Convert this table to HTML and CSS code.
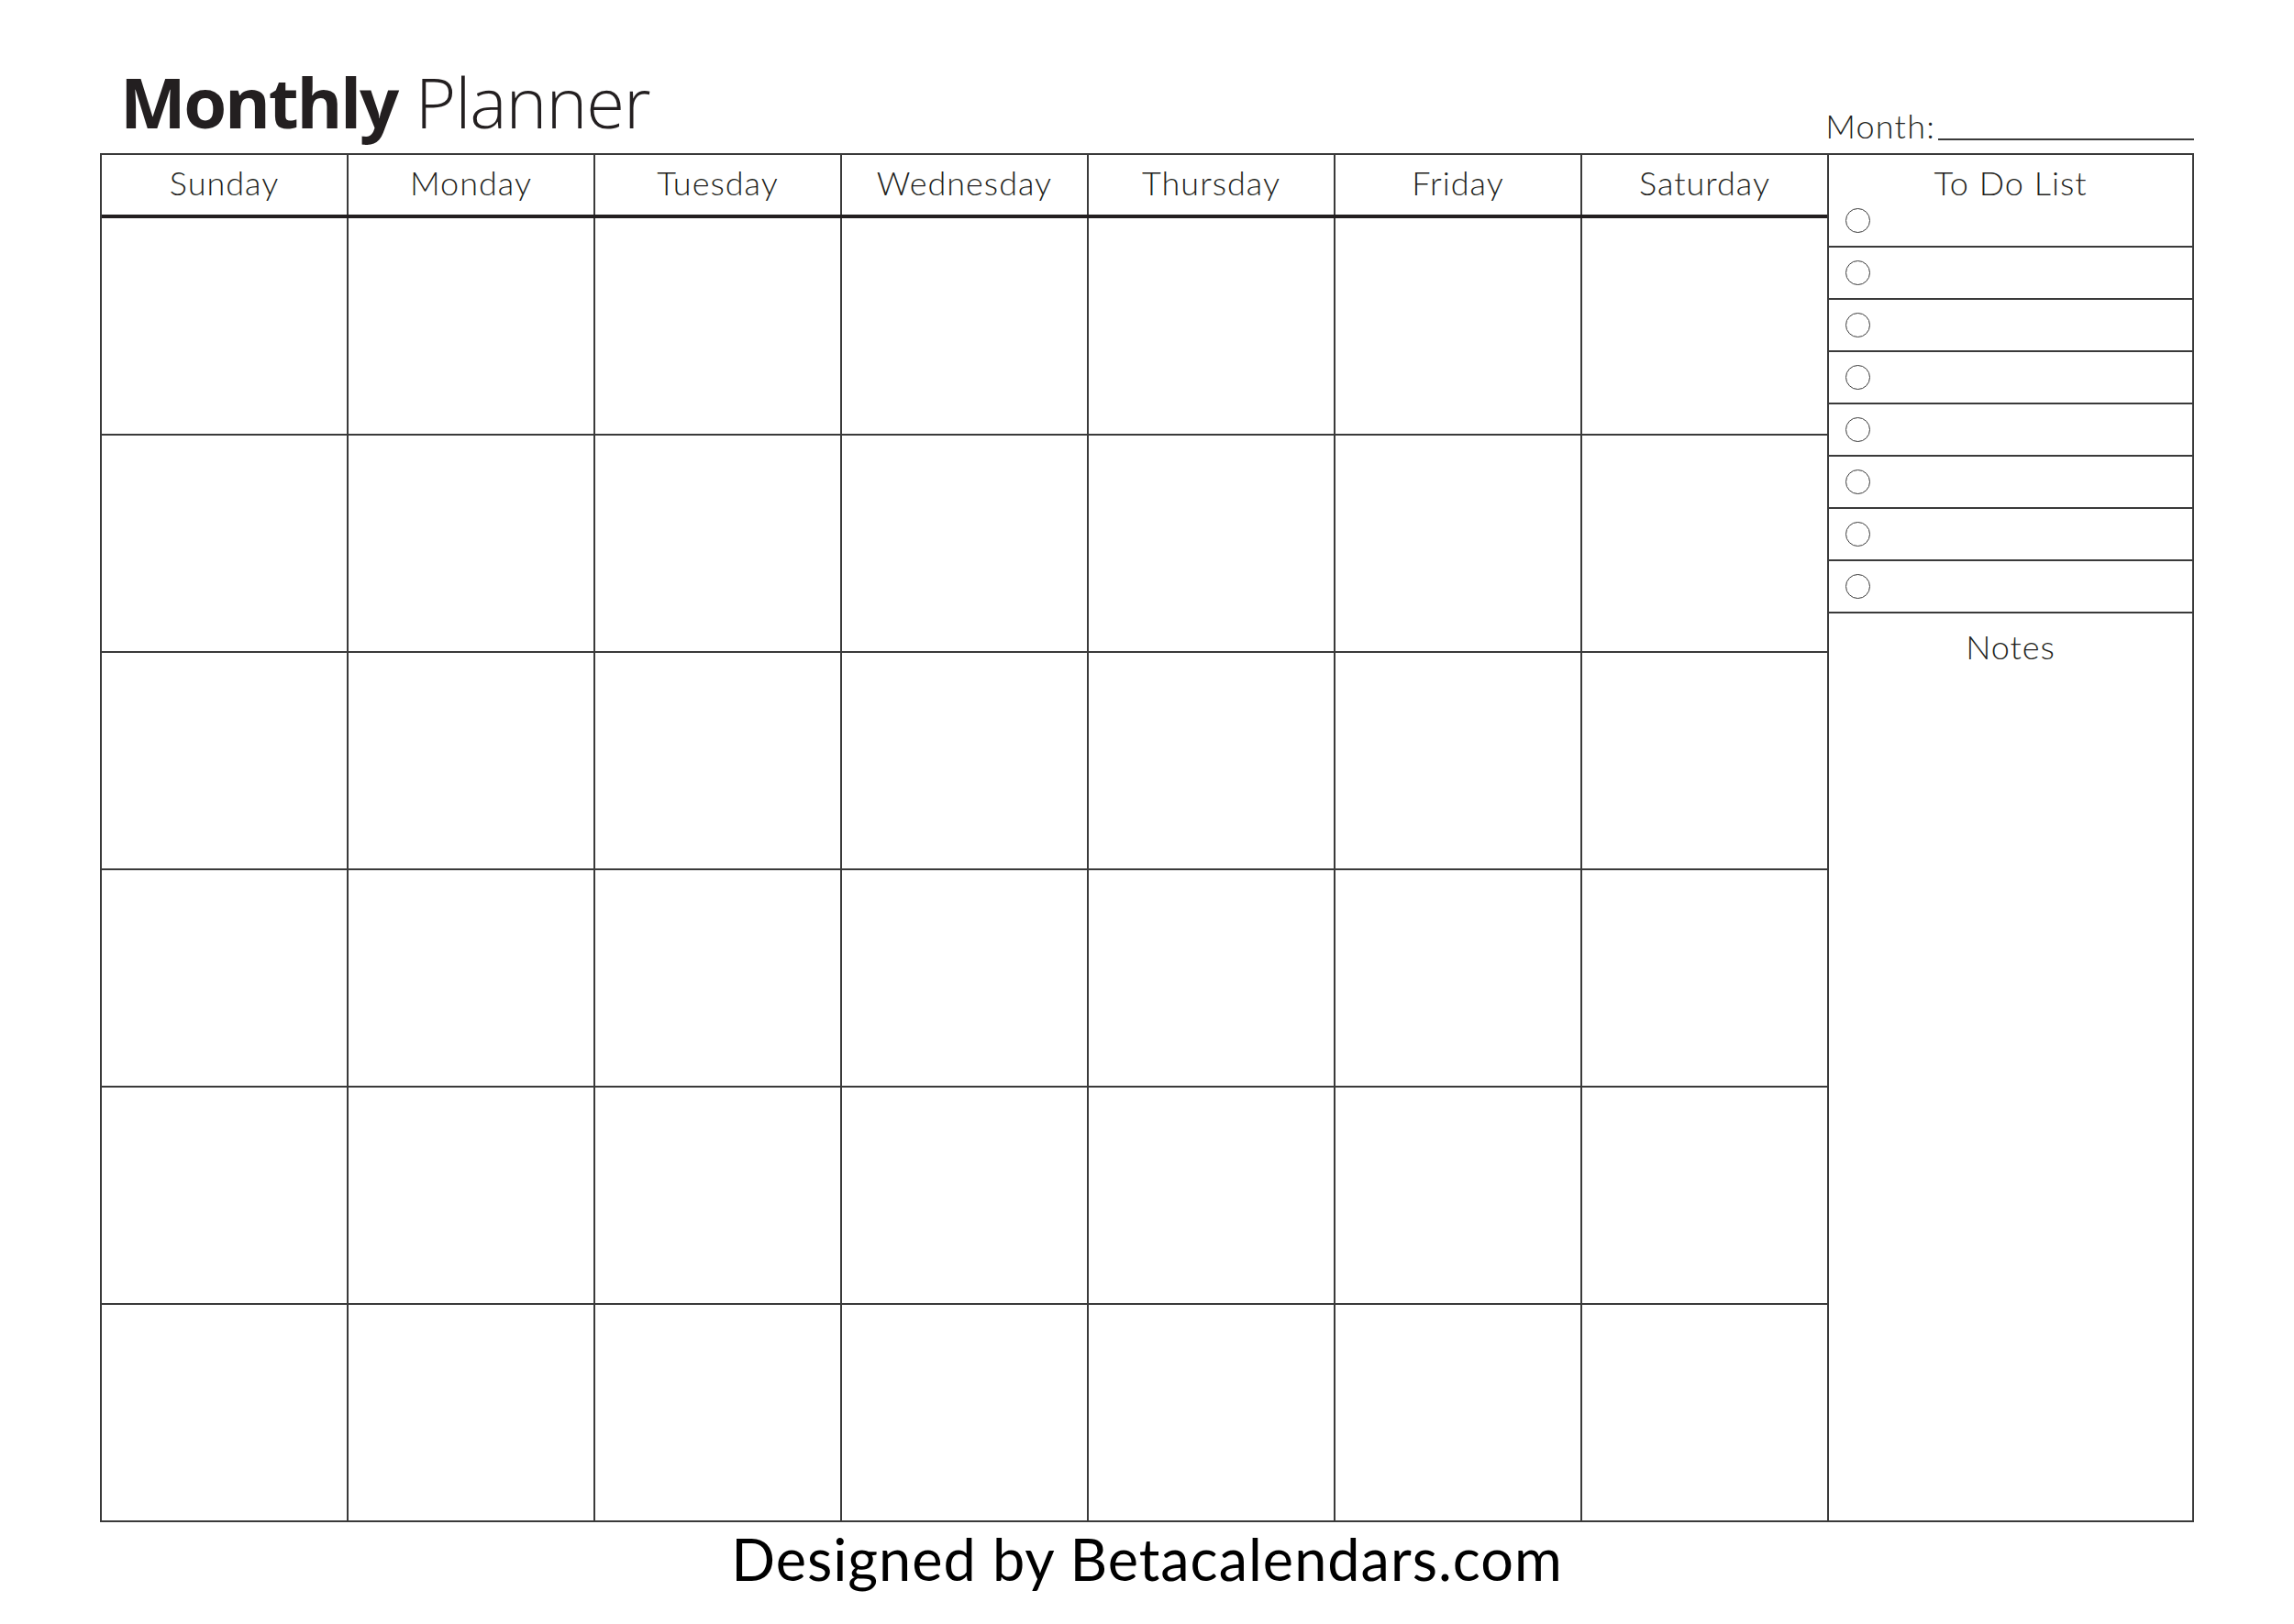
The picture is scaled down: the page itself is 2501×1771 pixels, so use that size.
FILE: index.html
```html
<!DOCTYPE html>
<html lang="en">
<head>
<meta charset="utf-8">
<title>Monthly Planner</title>
<link rel="stylesheet" href="styles.css">
</head>
<body>
<div class="page">
  <header class="head">
    <h1 class="title"><span class="bold">Monthly</span> <span class="light">Planner</span></h1>
    <div class="month"><span class="month-label">Month:</span><span class="month-line"></span></div>
  </header>
  <main class="sheet">
    <section class="cal">
      <div class="dayhead">
        <div class="dayname">Sunday</div>
        <div class="dayname">Monday</div>
        <div class="dayname">Tuesday</div>
        <div class="dayname">Wednesday</div>
        <div class="dayname">Thursday</div>
        <div class="dayname">Friday</div>
        <div class="dayname">Saturday</div>
      </div>
      <div class="days">
        <div class="day"></div><div class="day"></div><div class="day"></div><div class="day"></div><div class="day"></div><div class="day"></div><div class="day"></div>
        <div class="day"></div><div class="day"></div><div class="day"></div><div class="day"></div><div class="day"></div><div class="day"></div><div class="day"></div>
        <div class="day"></div><div class="day"></div><div class="day"></div><div class="day"></div><div class="day"></div><div class="day"></div><div class="day"></div>
        <div class="day"></div><div class="day"></div><div class="day"></div><div class="day"></div><div class="day"></div><div class="day"></div><div class="day"></div>
        <div class="day"></div><div class="day"></div><div class="day"></div><div class="day"></div><div class="day"></div><div class="day"></div><div class="day"></div>
        <div class="day"></div><div class="day"></div><div class="day"></div><div class="day"></div><div class="day"></div><div class="day"></div><div class="day"></div>
      </div>
    </section>
    <aside class="side">
      <div class="todo-title">To Do List</div>
      <ul class="todo">
        <li class="todo-item"><span class="check"></span></li>
        <li class="todo-item"><span class="check"></span></li>
        <li class="todo-item"><span class="check"></span></li>
        <li class="todo-item"><span class="check"></span></li>
        <li class="todo-item"><span class="check"></span></li>
        <li class="todo-item"><span class="check"></span></li>
        <li class="todo-item"><span class="check"></span></li>
        <li class="todo-item"><span class="check"></span></li>
      </ul>
      <div class="notes">Notes</div>
    </aside>
  </main>
  <footer class="foot">Designed by Betacalendars.com</footer>
</div>
</body>
</html>
```

FILE: styles.css
```css
html, body {
  margin: 0;
  padding: 0;
  background: #ffffff;
}

.page {
  width: 2283px;
  padding-left: 109px;
  color: #231f20;
  font-family: "Lato", "Liberation Sans", sans-serif;
}

.head {
  height: 167px;
  display: flex;
  justify-content: space-between;
  align-items: flex-end;
}

.title {
  margin: 0 0 5px 22px;
  font-family: "Open Sans", "Liberation Sans", sans-serif;
  font-size: 76px;
  line-height: normal;
  font-weight: 400;
  color: #231f20;
}

.title .bold {
  font-weight: 700;
  letter-spacing: -2.3px;
}

.title .light {
  font-weight: 300;
  letter-spacing: -1px;
}

.month {
  display: flex;
  align-items: flex-end;
  margin-bottom: 12px;
}

.month-label {
  font-size: 36px;
  line-height: 36px;
  font-weight: 300;
  letter-spacing: 1.2px;
}

.month-line {
  width: 279px;
  margin-left: 3px;
  margin-bottom: 2px;
  border-bottom: 2px solid #3a3a3a;
}

.sheet {
  box-sizing: border-box;
  height: 1493px;
  border: 2px solid #3a3a3a;
  display: flex;
}

.cal {
  box-sizing: border-box;
  flex: 0 0 1883px;
  border-right: 2px solid #3a3a3a;
  display: flex;
  flex-direction: column;
}

.dayhead {
  height: 65px;
  display: grid;
  grid-template-columns: repeat(7, 1fr);
  column-gap: 2px;
  background: #3a3a3a;
  border-bottom: 4px solid #231f20;
}

.dayname {
  background: #ffffff;
  display: flex;
  align-items: center;
  justify-content: center;
  font-size: 36px;
  font-weight: 300;
  letter-spacing: 1px;
  padding-bottom: 5px;
}

.days {
  flex: 1;
  display: grid;
  grid-template-columns: repeat(7, 1fr);
  grid-template-rows: repeat(6, 1fr);
  gap: 2px;
  background: #3a3a3a;
}

.day {
  background: #ffffff;
}

.side {
  flex: 1;
  display: flex;
  flex-direction: column;
}

.todo-title {
  height: 44px;
  text-align: center;
  font-size: 36px;
  line-height: 36px;
  font-weight: 300;
  letter-spacing: 1px;
  padding-top: 12px;
  box-sizing: border-box;
}

.todo {
  list-style: none;
  margin: 0;
  padding: 0;
}

.todo-item {
  height: 55px;
  border-bottom: 2px solid #3a3a3a;
  display: flex;
  align-items: center;
  padding-left: 18px;
}

.check {
  box-sizing: border-box;
  width: 27px;
  height: 27px;
  border: 1.5px solid #3a3a3a;
  border-radius: 50%;
}

.notes {
  text-align: center;
  font-size: 36px;
  line-height: 36px;
  font-weight: 300;
  letter-spacing: 1px;
  padding-top: 18px;
}

.foot {
  width: 2283px;
  text-align: center;
  font-size: 63px;
  line-height: 1.2;
  font-weight: 400;
  letter-spacing: 1px;
  color: #000000;
  margin-top: 2px;
}
```
